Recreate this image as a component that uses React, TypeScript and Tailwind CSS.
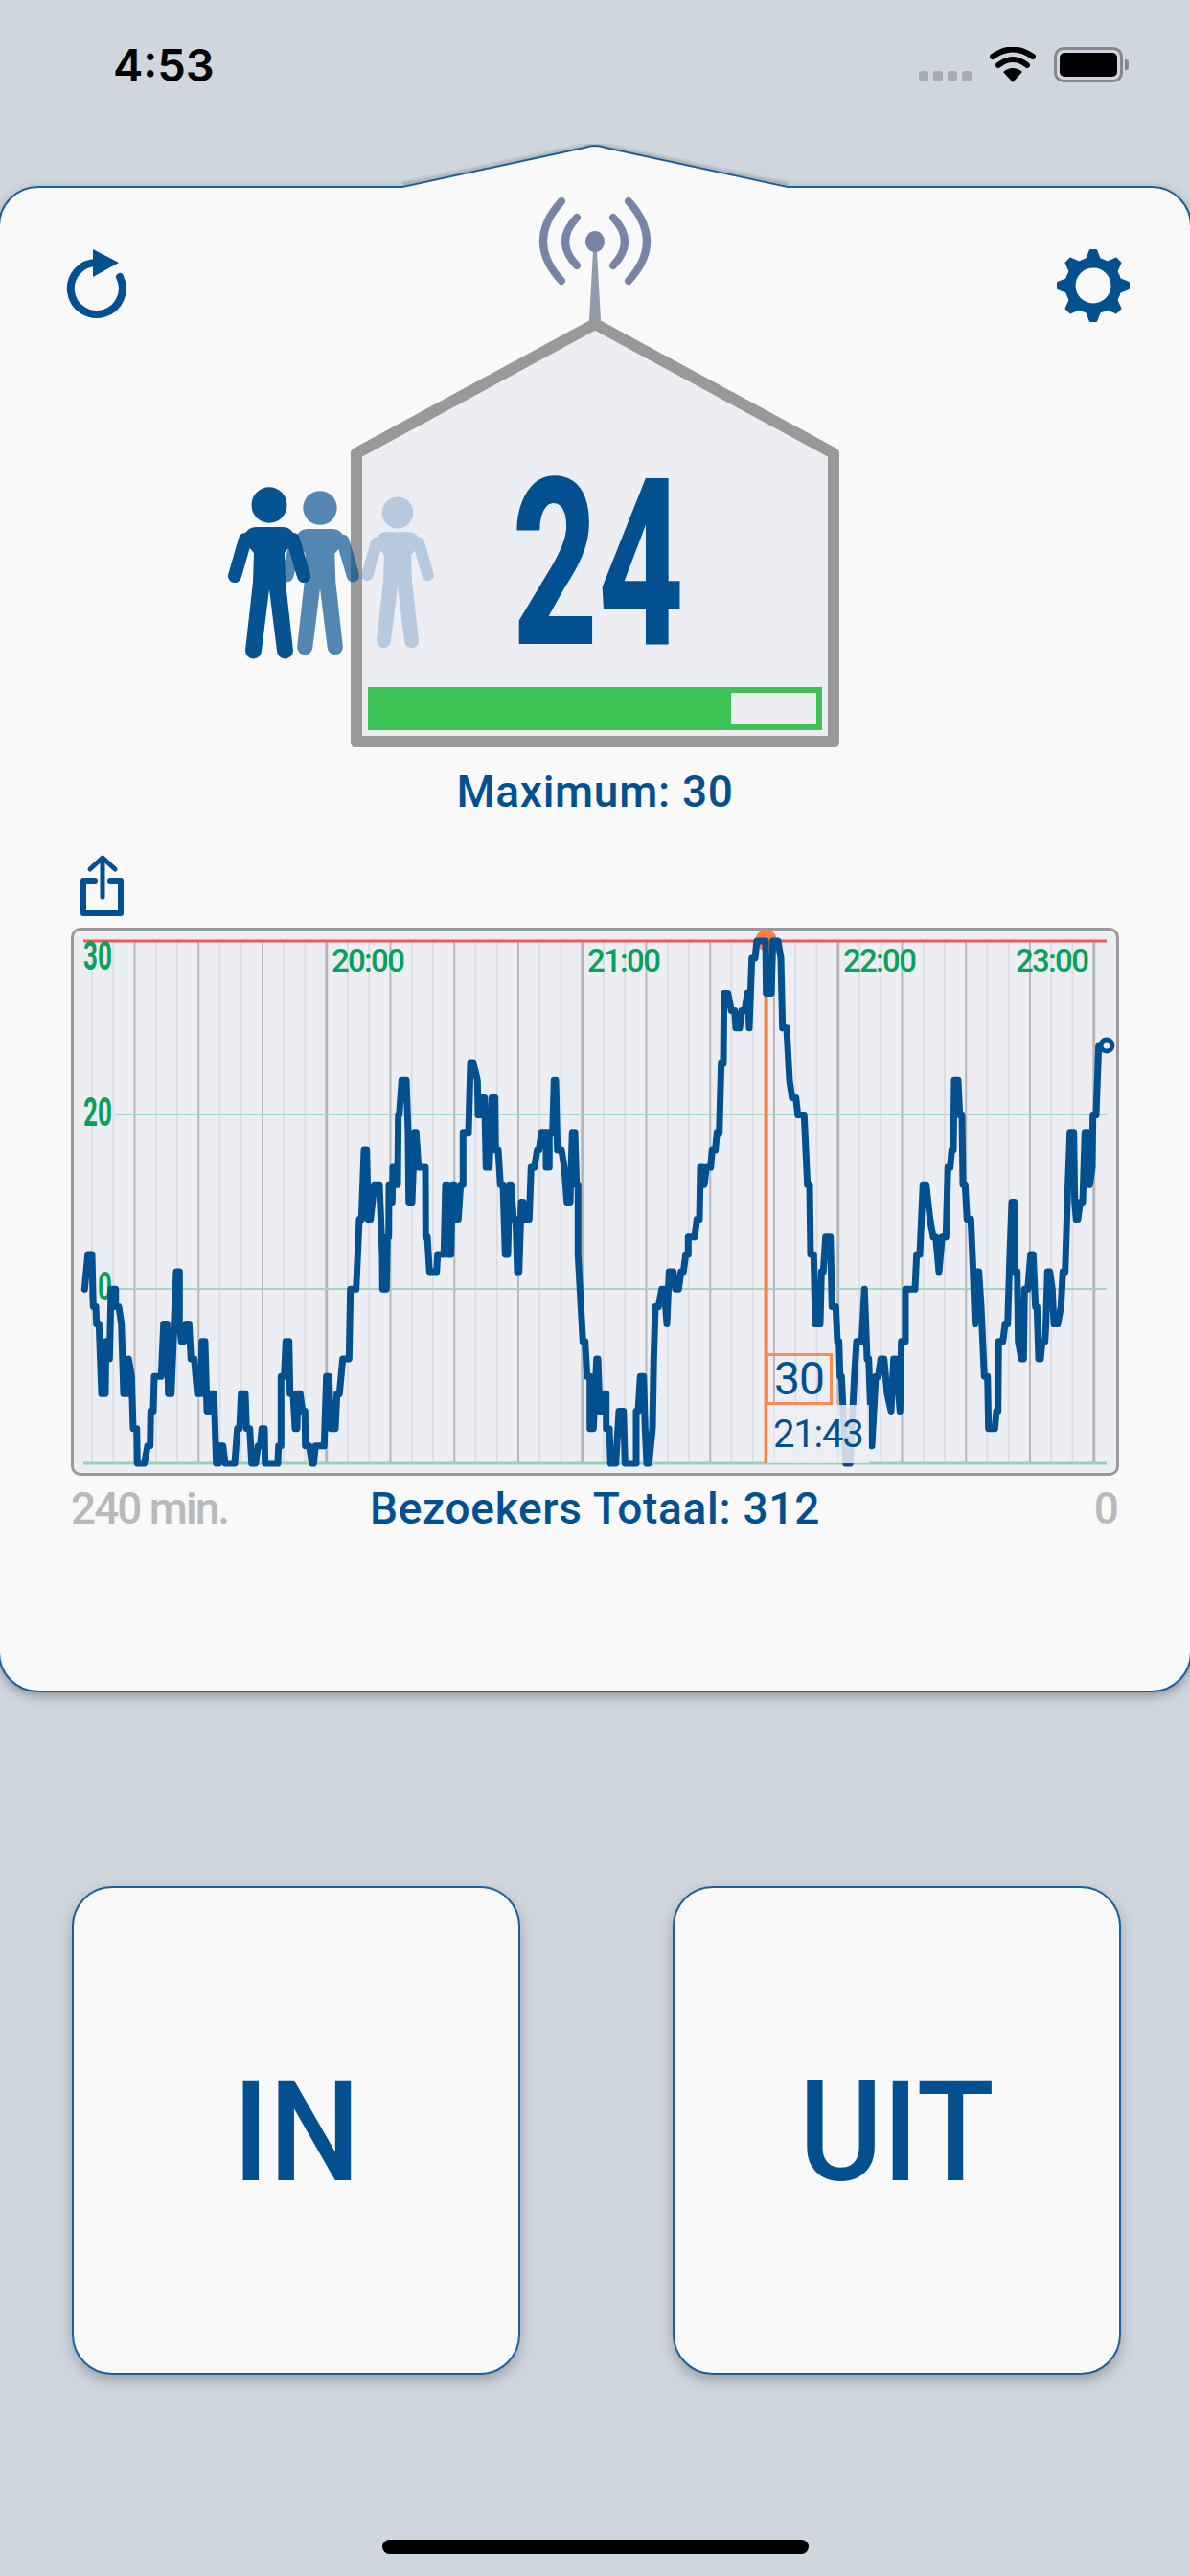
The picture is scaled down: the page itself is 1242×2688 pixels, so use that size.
const blue = "#02508f";

// traced from the reference: x offset of the crop, then [px * 3, visitors]
const traces: [number, number[][]][] = [
  [80, [[25,10],[35,12],[48,12],[52,9],[60,9],[62,8],[70,8],[78,4],[90,4],[92,7],[98,7],[103,6],[108,10],[122,10],[122,9],[132,9],[140,8],[147,4],[158,4],[163,6],[172,5],[177,2],[188,2],[190,0],[212,0],[222,1],[230,1],[232,3],[240,3],[243,5],[265,5],[272,8],[283,8],[287,4],[296,4],[305,8],[312,11],[322,11],[322,8],[328,7],[335,7],[342,8],[352,8],[358,6],[368,6],[378,4],[390,4],[392,7],[402,7],[408,3],[415,3],[418,4],[430,4],[437,0],[445,0],[450,1],[458,1],[465,0],[495,0],[503,2],[510,2],[515,4],[528,4],[532,2],[542,2],[548,0],[560,0],[568,1],[575,1],[580,2],[588,2],[590,0],[630,0],[632,1],[640,1],[640,5],[650,5],[655,7]]],
  [300, [[5,7],[8,4],[18,4],[24,2],[30,2],[33,4],[40,4],[47,3],[55,3],[56,1],[68,1],[77,0],[82,0],[88,1],[115,1],[122,5],[130,5],[136,2],[150,2],[155,4],[163,4],[173,6],[193,6],[197,10],[215,10],[225,14],[232,14],[240,18],[248,18],[253,14],[260,14],[272,16],[288,16],[297,12],[298,10],[310,10],[313,13],[317,13],[318,16],[325,16],[328,15],[330,17],[335,17],[340,16],[345,16],[347,20],[350,20],[358,22],[372,22],[378,19],[380,15],[390,15],[398,19],[403,19],[410,17],[432,17],[433,13],[438,13],[445,11],[467,11],[470,12],[490,12],[495,16],[500,16],[503,12],[512,12],[517,16],[522,16],[525,14],[535,14],[542,16],[550,16],[550,19],[567,19],[573,23],[582,23],[595,22],[597,20],[605,20],[608,21],[617,21],[622,17],[632,17],[640,21],[650,21],[652,18]]],
  [520, [[0,18],[7,16],[15,16],[22,12],[30,12],[35,16],[40,16],[48,14],[55,14],[60,11],[65,11],[72,15],[78,15],[83,14],[97,14],[103,17],[113,17],[122,18],[128,18],[135,19],[150,19],[150,17],[160,17],[160,19],[170,19],[175,22],[180,22],[185,18],[198,18],[207,17],[215,15],[225,15],[232,19],[240,19],[245,16],[250,16],[250,12],[262,8],[265,7],[272,7],[278,5],[287,5],[287,2],[298,2],[308,6],[312,6],[318,3],[328,3],[332,4],[338,4],[338,2],[348,2],[352,0],[368,0],[378,3],[392,3],[397,0],[432,0],[432,3],[438,3],[445,5],[455,5],[460,2],[465,0],[472,0],[483,2],[487,6],[492,9],[502,9],[512,10],[520,10],[528,8],[535,11],[548,11],[555,10],[565,10],[572,11],[580,11],[587,12],[595,12],[595,13],[615,13],[622,14],[630,14],[633,17],[640,17],[645,16],[652,17]]],
  [740, [[5,17],[10,18],[20,18],[25,19],[32,19],[38,23],[45,23],[47,27],[59,27],[70,26],[80,26],[84,25],[96,25],[102,26],[112,26],[120,27],[126,25],[134,29],[144,29],[150,30],[177,30],[179,27],[195,27],[200,30],[216,30],[225,29],[230,25],[243,25],[252,22],[260,21],[272,21],[278,20],[298,20],[308,16],[315,16],[318,12],[328,12],[333,8],[348,8],[352,11],[358,11],[365,13],[380,13],[385,9],[397,9],[402,7],[407,7],[410,5],[415,5],[428,0],[442,0],[455,5],[462,7],[478,7],[487,10],[495,6],[500,6],[510,1],[522,5],[530,5],[538,6],[548,6],[558,4],[570,3],[578,6],[585,6],[598,3],[602,7],[615,7],[615,10]]],
  [950, [[0,10],[15,10],[20,12],[30,12],[40,16],[50,16],[62,14],[72,13],[80,13],[90,11],[100,13],[112,13],[118,17],[125,17],[130,18],[135,18],[138,22],[150,22],[155,20],[162,20],[165,16],[172,16],[178,14],[190,14],[197,11],[203,8],[208,11],[215,11],[222,9],[232,5],[242,5],[245,2],[265,2],[270,3],[275,3],[277,7],[290,7],[297,8],[305,8],[312,12],[318,15],[326,15],[328,11],[335,11],[338,7],[348,6],[355,6],[358,10],[368,10],[377,12],[385,12],[392,9],[397,9],[402,6],[408,6],[413,7],[422,7],[425,8],[430,11],[437,11],[445,10],[450,8],[462,8],[472,9],[478,11],[485,11],[492,15],[500,19],[512,19],[515,15],[520,14],[525,14],[532,15],[540,15],[547,19],[555,19],[562,16],[570,17],[572,20],[582,20],[590,24],[600,24],[615,24]]],
];

const linePoints = traces
  .flatMap(([x0, pts]) => pts.map(([px, v]) => `${(x0 + px / 3).toFixed(1)},${(1527 - v * 18.17).toFixed(1)}`))
  .join(" ");

const gridLines = Array.from({ length: 48 }, (_, i) => {
  const isHour = (i - 11) % 12 === 0;
  const isQuarter = (i - 2) % 3 === 0;
  return {
    x: 96 + 22.25 * i,
    color: isHour || isQuarter ? "#b6b7bb" : "#dcdee3",
    width: isHour ? 3 : 2,
  };
});

const Person = ({ x, y, scale, opacity }: { x: number; y: number; scale: number; opacity: number }) => (
  <g transform={`translate(${x} ${y}) scale(${scale})`} opacity={opacity} fill={blue} stroke="none">
    <ellipse cx="0" cy="0" rx="18.5" ry="18.7" />
    <path d="M-14 23H14Q24 23 28 36L16 50L17 80L25 152A8.5 8.5 0 0 1 8 152L0 88L-8 152A8.5 8.5 0 0 1-25 152L-17 80L-16 50L-28 36Q-24 23-14 23Z" />
    <path d="M-25 36L-36 74M25 36L36 74" stroke={blue} strokeWidth="14" strokeLinecap="round" fill="none" />
  </g>
);

const HouseDrawing = () => (
  <svg className="absolute left-0 top-0 w-[1242px] h-[604px]" viewBox="0 196 1242 604">
    <path d="M615 334L619 262H623L627 334Z" fill="#939aab" />
    <ellipse cx="621" cy="252" rx="10" ry="11" fill="#7884a6" />
    <path d="M602 227Q578 252 602 277M586 210Q548 252 586 293M640 227Q664 252 640 277M656 210Q694 252 656 293" fill="none" stroke="#7884a6" strokeWidth="8" strokeLinecap="round" />
    <path d="M372 473L621 338L870 473V774H372Z" fill="#eceef4" stroke="#999999" strokeWidth="12" strokeLinejoin="round" />
    <Person x={415} y={535} scale={0.88} opacity={0.22} />
    <Person x={334} y={530} scale={0.955} opacity={0.67} />
    <Person x={281} y={527} scale={1} opacity={0.98} />
  </svg>
);

const RefreshIcon = () => (
  <svg className="w-[66px] h-[76px]" viewBox="68 260 66 76">
    <path d="M125 291A27 27 0 1 1 101 276" fill="none" stroke={blue} strokeWidth="8" strokeLinecap="round" />
    <path d="M97 262L124 276L97 291Z" fill={blue} />
  </svg>
);

const GearIcon = () => (
  <svg className="w-[80px] h-[80px]" viewBox="-40 -40 80 80">
    <circle r="24" fill="none" stroke={blue} strokeWidth="11" />
    {[0, 45, 90, 135, 180, 225, 270, 315].map((a) => (
      <path key={a} d="M-8-26L-3.5-37.5H3.5L8-26Z" fill={blue} stroke={blue} strokeWidth="1" strokeLinejoin="round" transform={`rotate(${a})`} />
    ))}
  </svg>
);

const ShareIcon = () => (
  <svg className="w-[46px] h-[66px]" viewBox="84 891 46 66">
    <path d="M107 896V936M94 907L107 895L120 907" fill="none" stroke={blue} strokeWidth="5" strokeLinecap="round" strokeLinejoin="round" />
    <path d="M99 919H87V953H126V919H115" fill="none" stroke={blue} strokeWidth="6" strokeLinecap="round" strokeLinejoin="round" />
  </svg>
);

const Chart = () => (
  <div className="relative w-[1094px] h-[572px] border-[3px] border-[#999999] rounded-[10px] bg-[#eceef4]">
    <svg className="absolute left-0 top-0 w-[1088px] h-[566px]" viewBox="77 971 1088 566">
      {gridLines.map((g) => (
        <line key={g.x} x1={g.x} x2={g.x} y1="983" y2="1527" stroke={g.color} strokeWidth={g.width} />
      ))}
      <line x1="120" x2="1155" y1="1163" y2="1163" stroke="#a0d8bf" strokeWidth="2" />
      <line x1="120" x2="1155" y1="1345" y2="1345" stroke="#a0d8bf" strokeWidth="2" />
      <line x1="87" x2="1155" y1="1527" y2="1527" stroke="#95d2b6" strokeWidth="3" />
      <line x1="87" x2="1155" y1="982" y2="982" stroke="#ee5a4c" strokeWidth="3" />
    </svg>

    <span className="absolute left-[10px] top-[9px] leading-[36px] text-[42px] font-bold text-[#07a05c] origin-left scale-x-[0.62]">30</span>
    <span className="absolute left-[10px] top-[172px] leading-[36px] text-[42px] font-bold text-[#07a05c] origin-left scale-x-[0.62]">20</span>
    <span className="absolute left-[10px] top-[354px] leading-[36px] text-[42px] font-bold text-[#07a05c] origin-left scale-x-[0.62]">10</span>

    <span className="absolute left-[269px] top-[16px] leading-[32px] text-[33px] tracking-[-1.7px] font-medium text-[#07a05c]">20:00</span>
    <span className="absolute left-[536px] top-[16px] leading-[32px] text-[33px] tracking-[-1.7px] font-medium text-[#07a05c]">21:00</span>
    <span className="absolute left-[803px] top-[16px] leading-[32px] text-[33px] tracking-[-1.7px] font-medium text-[#07a05c]">22:00</span>
    <span className="absolute left-[983px] top-[16px] leading-[32px] text-[33px] tracking-[-1.7px] font-medium text-[#07a05c]">23:00</span>

    <svg className="absolute left-0 top-0 w-[1088px] h-[566px] overflow-visible" viewBox="77 971 1088 566">
      <line x1="799.6" x2="799.6" y1="982" y2="1527" stroke="#ff7f3f" strokeWidth="4" />
      <circle cx="799.6" cy="981" r="11" fill="#ff7f3f" />
      <polyline points={linePoints} fill="none" stroke={blue} strokeWidth="7" strokeLinejoin="round" strokeLinecap="round" />
      <circle cx="1155" cy="1091" r="6" fill="#eceef4" stroke={blue} strokeWidth="5" />
    </svg>

    {/* value + time tooltip next to the crosshair */}
    <div className="absolute left-[722px] top-[441px] w-[70px] h-[54px] border-[3px] border-[#ff8a55] flex items-center justify-center">
      <span className="text-[48px] leading-[48px] tracking-[-1px] text-[#02508f]">30</span>
    </div>
    <div className="absolute left-[724px] top-[495px] w-[106px] h-[61px] bg-[#edeff4]/85 flex items-center pl-[6px]">
      <span className="text-[40px] leading-[44px] tracking-[-1.2px] text-[#02508f]">21:43</span>
    </div>
  </div>
);

const BigButton = ({ label, scaleClass }: { label: string; scaleClass: string }) => (
  <div className="w-[468px] h-[510px] pt-[6px] bg-[#f9f9f9] border-2 border-[#1d5f9c] rounded-[42px] shadow-[0_6px_14px_rgba(0,0,0,0.25)] flex items-center justify-center">
    <span className={`text-[146px] leading-none font-medium text-[#02508f] ${scaleClass}`}>{label}</span>
  </div>
);

const StatusBar = () => (
  <div className="h-[194px] flex items-start justify-between pl-[118px] pr-[64px] pt-[44px] text-black">
    <span className="[font-family:Inter,sans-serif] text-[47px] leading-[48px] font-semibold">4:53</span>
    <div className="flex items-end gap-[19px] pt-[5px]">
      <div className="flex gap-[5px] pb-[1px]">
        <div className="w-[10px] h-[11px] rounded-[3px] bg-[#a8abb2]" />
        <div className="w-[10px] h-[11px] rounded-[3px] bg-[#a8abb2]" />
        <div className="w-[10px] h-[11px] rounded-[3px] bg-[#a8abb2]" />
        <div className="w-[10px] h-[11px] rounded-[3px] bg-[#a8abb2]" />
      </div>
      <svg className="w-[48px] h-[37px]" viewBox="0 0 48 37">
        <path d="M24 37L14 26Q24 18 34 26Z" fill="#000" />
        <path d="M9 19Q24 7 39 19" fill="none" stroke="#000" strokeWidth="6" strokeLinecap="round" />
        <path d="M3 10Q24 -5 45 10" fill="none" stroke="#000" strokeWidth="6" strokeLinecap="round" />
      </svg>
      <div className="flex items-center gap-[2px]">
        <div className="w-[72px] h-[37px] border-[3px] border-[#85878b] rounded-[10px] p-[3px]">
          <div className="w-full h-full bg-black rounded-[5px]" />
        </div>
        <div className="w-[4px] h-[11px] bg-[#85878b] rounded-r-[3px]" />
      </div>
    </div>
  </div>
);

export default function App() {
  return (
    <div className="w-[1242px] h-[2688px] bg-[#cfd6de] overflow-hidden [font-family:Roboto,sans-serif]">
      <StatusBar />

      {/* side borders sit just off screen, as on the device */}
      <div className="relative -mx-[2px] h-[1572px] bg-[#f9f9f9] border-2 border-[#1d5f9c] rounded-[42px] shadow-[0_4px_12px_rgba(0,0,0,0.3)]">
        {/* roof bump above the card */}
        <svg className="absolute left-[416px] top-[-46px] w-[410px] h-[50px]" viewBox="416 150 410 50">
          <path d="M420 194L610 154Q621 150 632 154L822 194" fill="none" stroke="#000" strokeOpacity="0.06" strokeWidth="10" />
          <path d="M420 194L610 154Q621 150 632 154L822 194" fill="none" stroke="#000" strokeOpacity="0.08" strokeWidth="6" />
          <path d="M416 194H420L610 154Q621 150 632 154L822 194H826V200H416Z" fill="#f9f9f9" />
          <path d="M416 195H420L610 154Q621 150 632 154L822 195H826" fill="none" stroke="#1d5f9c" strokeWidth="2" />
        </svg>

        <div className="relative h-[603px]">
          <HouseDrawing />
          <div className="relative flex items-start justify-between pl-[68px] pr-[61px] pt-[62px]">
            <RefreshIcon />
            <GearIcon />
          </div>
          <div className="absolute left-[524px] top-[273px] w-[200px] flex justify-center">
            <span className="text-[243px] leading-[240px] font-extrabold text-[#02508f] scale-x-[0.64]">24</span>
          </div>
          <div className="absolute left-[384px] top-[521px] w-[474px] h-[45px] border-[6px] border-[#3dc353]">
            <div className="w-[373px] h-full bg-[#3dc353]" />
          </div>
        </div>

        <p className="text-center text-[46px] leading-[54px] tracking-[0.7px] font-medium text-[#02508f]">Maximum: 30</p>

        <div className="px-[74px] pt-[38px]">
          <div className="pl-[10px] h-[66px]">
            <ShareIcon />
          </div>
          <div className="mt-[11px]">
            <Chart />
          </div>
          <div className="mt-[11px] grid grid-cols-[1fr_auto_1fr] items-center text-[46px] leading-[46px] font-medium">
            <span className="text-[#b9b9b9] tracking-[-2px]">240 min.</span>
            <span className="text-[#02508f] tracking-[0.7px]">Bezoekers Totaal: 312</span>
            <span className="text-[#b9b9b9] text-right">0</span>
          </div>
        </div>
      </div>

      <div className="mt-[202px] flex justify-between pl-[75px] pr-[72px]">
        <BigButton label="IN" scaleClass="scale-x-[0.92]" />
        <BigButton label="UIT" scaleClass="scale-x-[0.91]" />
      </div>

      <div className="mt-[172px] flex justify-center">
        <div className="w-[445px] h-[15px] rounded-full bg-black" />
      </div>
    </div>
  );
}
